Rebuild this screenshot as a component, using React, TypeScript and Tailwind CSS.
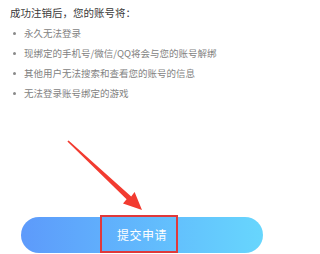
export default function App() {
  const items = [
    "永久无法登录",
    "现绑定的手机号/微信/QQ将会与您的账号解绑",
    "其他用户无法搜索和查看您的账号的信息",
    "无法登录账号绑定的游戏",
  ];

  return (
    <div
      className="relative w-[284px] h-[254px] bg-white overflow-hidden"
      style={{ fontFamily: '"Noto Sans CJK SC", "Noto Sans", sans-serif' }}
    >
      <div className="pt-[3px] pl-[10px]">
        <p className="text-[10.5px] font-normal leading-[20px] text-[#3a3a3a]">成功注销后，您的账号将：</p>
        <ul>
          {items.map((t) => (
            <li key={t} className="flex items-center h-[20px] text-[9.5px] text-[#828282]">
              <span className="w-[3px] h-[3px] rounded-full bg-[#8a8a8a] ml-[3px] mr-[8px]" />
              {t}
            </li>
          ))}
        </ul>
      </div>

      <div className="mt-[114px] px-[21px]">
        <div className="relative h-[36px] rounded-full bg-gradient-to-r from-[#5d9afb] to-[#67d6fd] flex items-center justify-center">
          <span className="text-[12px] text-white tracking-[0.5px]">提交申请</span>
          <div className="absolute left-[79px] top-[-2px] w-[78px] h-[38px] border-2 border-[#e0393b]" />
        </div>
      </div>

      <svg className="absolute left-0 top-0" width="284" height="254" viewBox="0 0 284 254">
        <polygon
          points="67.4,141.6 68.6,140.4 131.2,196.5 134.6,192.1 142,210 123,203.6 126.6,199.2"
          fill="#f23b30"
        />
      </svg>
    </div>
  );
}
